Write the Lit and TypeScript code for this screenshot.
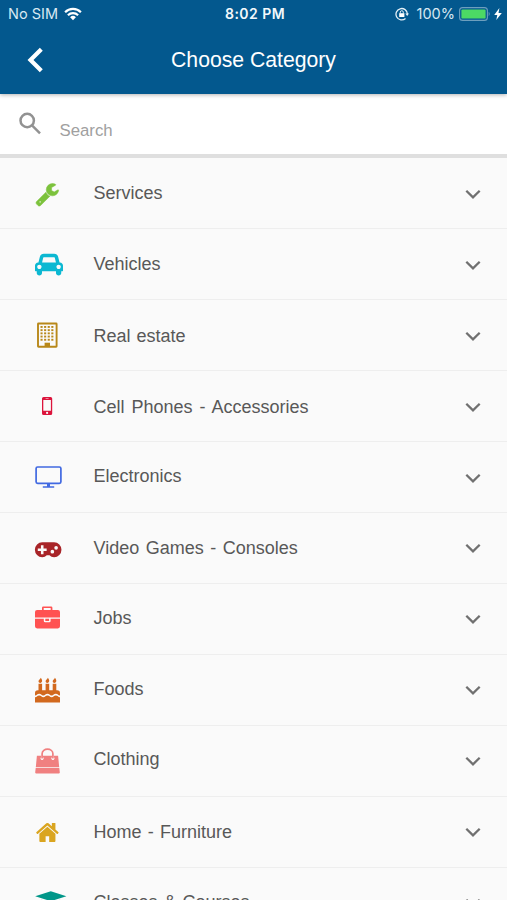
import { LitElement, html, svg, css } from "lit";
import { customElement, property } from "lit/decorators.js";
import { styleMap } from "lit/directives/style-map.js";

const windows = [0, 1, 2, 3, 4].flatMap((r) => [0, 1, 2, 3].map((c) => [10.5 + c * 3.6, 9 + r * 3.2]));

const icons: Record<string, unknown> = {
  wrench: svg`<path transform="translate(4.9 5.8) scale(.0137)" stroke="currentColor" stroke-width="40" d="M448 1472q0-26-19-45t-45-19-45 19-19 45 19 45 45 19 45-19 19-45zm644-420l-682 682q-37 37-90 37-52 0-91-37l-106-108q-38-36-38-90 0-53 38-91l681-681q39 98 114.5 173.5t173.5 114.5zm634-435q0 39-23 106-47 134-164.5 217.5t-258.5 83.5q-185 0-316.5-131.5t-131.5-316.5 131.5-316.5 316.5-131.5q58 0 121.500 16.500t107.500 46.500q16 11 16 28t-16 28l-293 169v224l193 107q5-3 79-48.500t135.500-81 70.500-35.500q15 0 23.500 10t8.500 25z"/>`,
  car: svg`<path transform="translate(5 6) scale(.01367)" d="M480 1088q0-66-47-113t-113-47-113 47-47 113 47 113 113 47 113-47 47-113zm36-320h1016l-89-357q-2-8-14-17.500t-21-9.500h-768q-9 0-21 9.500t-14 17.500zm1372 320q0-66-47-113t-113-47-113 47-47 113 47 113 113 47 113-47 47-113zm160-96v384q0 14-9 23t-23 9h-96v128q0 80-56 136t-136 56-136-56-56-136v-128h-1024v128q0 80-56 136t-136 56-136-56-56-136v-128h-96q-14 0-23-9t-9-23v-384q0-93 65.500-158.500t158.500-65.500h28l105-419q23-94 104-157.500t179-63.500h768q98 0 179 63.500t104 157.500l105 419h28q93 0 158.500 65.500t65.500 158.500z"/>`,
  building: svg`<rect x="8" y="6.500" width="18.600" height="23.300" rx=".5" fill="none" stroke="currentColor" stroke-width="1.900"/>
    ${windows.map(([x, y]) => svg`<rect x=${x} y=${y} width="2.100" height="1.900"/>`)}
    <path d="M14.600 30v-4.300h5.400V30z"/>`,
  phone: svg`<path fill-rule="evenodd" d="M13.600 9h7q1.600 0 1.600 1.600v14.800q0 1.600-1.600 1.600h-7q-1.600 0-1.600-1.600v-14.800q0-1.600 1.600-1.600zM13.300 12v10.800h7.600V12zM15.600 10.200v.6h3v-.6zM17.100 23.800a1.100 1.100 0 1 0 0 2.200a1.100 1.100 0 1 0 0-2.200z"/>`,
  monitor: svg`<rect x="6.100" y="8" width="24.800" height="16.300" rx="1.500" fill="none" stroke="currentColor" stroke-width="1.700"/><path d="M17 24.500h3v2.800h4.200v1.500H12.800v-1.500H17z"/>`,
  gamepad: svg`<path transform="translate(.1 .3) scale(.985 1)" fill-rule="evenodd" d="M12.300 12H24.400a7.400 7.400 0 0 1 0 14.900c-2 0-3.500-.8-4.700-2h-2.800c-1.200 1.200-2.600 2-4.600 2a7.400 7.400 0 0 1 0-14.900zM11 15v3.200H7.800v2.600H11V24h2.600v-3.200h3.200v-2.600h-3.200V15zM22.600 19.500a1.850 1.850 0 1 0 0 3.700a1.850 1.850 0 1 0 0-3.700zM26.400 15.700a1.850 1.850 0 1 0 0 3.700a1.850 1.850 0 1 0 0-3.700z"/>`,
  briefcase: svg`<path transform="translate(0 .4)" fill-rule="evenodd" d="M12 8.600V6.300q0-1.300 1.300-1.300h7.800q1.300 0 1.300 1.300v2.300h5.500q2.100 0 2.100 2.100v5.500H5v-5.500q0-2.100 2.100-2.100zM13.700 8.600h7V6.700h-7zM5 17.400h8.800v2.100q0 1.400 1.400 1.400h4q1.400 0 1.400-1.400v-2.100H30v7.500q0 2.100-2.100 2.100H7.100Q5 27 5 24.900zM15.300 17.400h3.800v2.100h-3.800z"/>`,
  cake: svg`<path d="M5 25.200c2.100 0 2.200-1.700 4.200-1.700s2.200 1.700 4.200 1.700 2.100-1.700 4.100-1.700 2.200 1.700 4.200 1.700 2.100-1.700 4.100-1.700 2.200 1.700 4.200 1.700v5.300H5zM8.500 11.700h3.600v6.500h3.500v-6.500h3.600v6.500h3.500v-6.500h3.600v6.500h.8q2.900 0 2.900 2.800v2.400c-2.100 0-2.200-1.700-4.200-1.700s-2.200 1.700-4.200 1.700-2.100-1.700-4.100-1.700-2.200 1.700-4.200 1.700-2.100-1.700-4.100-1.700-2.200 1.700-4.200 1.700V21q0-2.800 2.900-2.800h.6z"/>
    ${[0, 7.1, 14.2].map((x) => svg`<path transform="translate(${x} 0)" d="M10.600 5.800c2.300 2.200 1.800 5.100-.3 5.100-2.200 0-2.200-2.300-.8-3.300.7-.5 1-1 1.100-1.800z"/>`)}`,
  bag: svg`<path d="M6.900 12.700h4.300v1.500a1.500 1.500 0 1 0 1.800 0v-1.500h9v1.500a1.500 1.500 0 1 0 1.800 0v-1.500h4.300l1.100 11.500H5.800zM5.700 25.100h23.600l.5 4.200q.1 1.200-1.100 1.200H6.300q-1.200 0-1.100-1.200z"/><path d="M12.100 14.700v-4c0-6 10.800-6 10.800 0v4" fill="none" stroke="currentColor" stroke-width="1.700" stroke-linecap="round"/>`,
  home: svg`<path transform="translate(4.900 5.200) scale(.01395 .0148)" d="M1472 992v480q0 26-19 45t-45 19h-384v-384h-256v384h-384q-26 0-45-19t-19-45v-480q0-1 .5-3t.5-3l575-474 575 474q1 2 1 6zm223-69l-62 74q-8 9-21 11h-3q-13 0-21-7l-692-577-692 577q-12 8-24 7-13-2-21-11l-62-74q-8-10-7-23.500t11-21.500l719-599q32-26 76-26t76 26l244 204v-195q0-14 9-23t23-9h192q14 0 23 9t9 23v408l219 182q10 8 11 21.500t-7 23.500z"/>`,
  cap: svg`<path d="M20.800 7.200l15.600 5-15.600 5-15.600-5zM11.500 15.700l9.300 3 9.300-3v6c-3 4-15.600 4-18.600 0z"/>`,
};

interface Category {
  name: string;
  icon: string;
  color: string;
  shift: number;
  gap: number;
}

const categories: Category[] = [
  { name: "Services", icon: "wrench", color: "#7cc23c", shift: -1, gap: 0 },
  { name: "Vehicles", icon: "car", color: "#0cb8d2", shift: -0.5, gap: 0 },
  { name: "Real estate", icon: "building", color: "#b8881a", shift: 1, gap: 1 },
  { name: "Cell Phones - Accessories", icon: "phone", color: "#dc143c", shift: 1, gap: 2 },
  { name: "Electronics", icon: "monitor", color: "#4169e1", shift: -2.5, gap: 0 },
  { name: "Video Games - Consoles", icon: "gamepad", color: "#a82428", shift: 1, gap: 1.5 },
  { name: "Jobs", icon: "briefcase", color: "#ff5252", shift: -2.5, gap: 0 },
  { name: "Foods", icon: "cake", color: "#d2691e", shift: -2.5, gap: 0 },
  { name: "Clothing", icon: "bag", color: "#f08080", shift: -2.5, gap: 0 },
  { name: "Home - Furniture", icon: "home", color: "#daa520", shift: 0.5, gap: 1.2 },
  { name: "Classes & Courses", icon: "cap", color: "#009688", shift: -1, gap: 1.5 },
];

@customElement("category-row")
export class CategoryRow extends LitElement {
  @property({ attribute: false }) item!: Category;

  static styles = css`
    :host { display: flex; align-items: center; box-sizing: border-box; height: 70.9px; padding: 0 26px 0 30px; border-bottom: 1px solid #eeeeee; }
    .icon { width: 36px; height: 36px; flex: none; fill: currentColor; overflow: visible; }
    .label { flex: 1; margin-left: 27.500px; font-size: 18px; line-height: 24px; color: #585858; white-space: nowrap; }
    .chevron { width: 16px; height: 10px; flex: none; margin-top: 1px; fill: none; stroke: #707070; stroke-width: 2.300; }
  `;

  render() {
    const { name, icon, color, shift, gap } = this.item;
    return html`
      <svg class="icon" viewBox="0 0 36 36" style=${styleMap({ color })}>${icons[icon]}</svg>
      <span class="label" style=${styleMap({ marginTop: `${shift}px`, wordSpacing: `${gap}px` })}>${name}</span>
      <svg class="chevron" viewBox="0 0 16 10"><path d="M1.300 1.700L8 8.300l6.700-6.600"/></svg>
    `;
  }
}

@customElement("app-root")
export class AppRoot extends LitElement {
  static styles = css`
    :host { display: flex; flex-direction: column; width: 507px; height: 900px; overflow: hidden; background: #fafafa; font-family: "Liberation Sans", Arial, sans-serif; }
    .top { flex: none; height: 94px; background: #03588e; color: #fff; box-shadow: 0 1px 4px rgba(0, 0, 0, .3); z-index: 1; }
    .status { display: grid; grid-template-columns: 1fr auto 1fr; align-items: center; height: 27px; padding: 0 5px 0 8px; font-family: Inter, sans-serif; font-size: 14.500px; color: #d8e8f2; }
    .side { display: flex; align-items: center; }
    .right { justify-content: flex-end; }
    .clock { font-weight: 600; color: #f2f8fc; font-size: 14px; letter-spacing: .45px; }
    .wifi { width: 18px; height: 14px; margin-left: 6px; }
    .lock { width: 14px; height: 14px; margin-right: 8px; }
    .battery { width: 32px; height: 14px; margin-left: 4px; }
    .bolt { width: 8px; height: 12px; margin-left: 3px; }
    .nav { display: grid; grid-template-columns: 60px 1fr 60px; align-items: center; height: 66px; }
    .back { width: 16px; height: 26px; margin-left: 27px; fill: none; stroke: #fff; stroke-width: 4.200; }
    .title { margin: 0; text-align: center; font-size: 21.200px; font-weight: 400; line-height: 26px; white-space: nowrap; }
    .search { flex: none; display: flex; box-sizing: border-box; height: 64px; padding: 18px 0 0 18px; background: #fff; border-bottom: 4px solid #dfdfdf; }
    .glass { width: 24px; height: 24px; fill: none; stroke: #929292; stroke-width: 2.500; }
    .hint { margin: 8px 0 0 17.500px; font-size: 16.800px; line-height: 22px; color: #a0a0a0; }
    .list { flex: 1; min-height: 0; box-sizing: border-box; padding-top: .6px; overflow: hidden; }
  `;

  render() {
    return html`
      <header class="top">
        <div class="status">
          <div class="side">
            <span>No SIM</span>
            <svg class="wifi" viewBox="0 0 18 14" fill="none" stroke="#fff" stroke-width="2.200">
              <path d="M1.100 5.200a11.200 11.200 0 0 1 15.800 0M3.900 8.200a7.200 7.200 0 0 1 10.200 0"/>
              <path d="M9 13.200L6.100 10.300a4.100 4.100 0 0 1 5.800 0z" fill="#fff" stroke="none"/>
            </svg>
          </div>
          <span class="clock">8:02 PM</span>
          <div class="side right">
            <svg class="lock" viewBox="0 0 14 14" fill="none" stroke="#e4f0f7" stroke-width="1.300">
              <path d="M10.500 11.500A5.700 5.700 0 1 1 12.400 7"/>
              <path d="M10.300 6.600h3.700l-1.800 2.300z" fill="#e4f0f7" stroke="none"/>
              <rect x="4.200" y="6.200" width="5.200" height="3.800" fill="#fff" stroke="none"/>
              <path d="M5.300 6.500V5.200a1.500 1.500 0 0 1 3 0v1.300" stroke-width="1"/>
            </svg>
            <span>100%</span>
            <svg class="battery" viewBox="0 0 32 14">
              <rect x=".6" y=".6" width="27.800" height="12.800" rx="3" fill="none" stroke="#6d9fbe" stroke-width="1.100"/>
              <rect x="2.400" y="2.400" width="24.200" height="9.200" rx="1.200" fill="#4cd964"/>
              <path d="M29.700 4.800q2 2.200 0 4.400z" fill="#6d9fbe"/>
            </svg>
            <svg class="bolt" viewBox="0 0 8 12" fill="#fff"><path d="M5.400 0L.2 6.900h3.100L2.300 12l5.500-7H4.500z"/></svg>
          </div>
        </div>
        <div class="nav">
          <svg class="back" viewBox="0 0 16 26"><path d="M14.300 2.300L3.500 13l10.800 10.700"/></svg>
          <h1 class="title">Choose Category</h1>
        </div>
      </header>
      <div class="search">
        <svg class="glass" viewBox="0 0 24 24"><circle cx="9.200" cy="8.500" r="6.700"/><path d="M14 13.300l8 8"/></svg>
        <span class="hint">Search</span>
      </div>
      <main class="list">${categories.map((c) => html`<category-row .item=${c}></category-row>`)}</main>
    `;
  }
}
